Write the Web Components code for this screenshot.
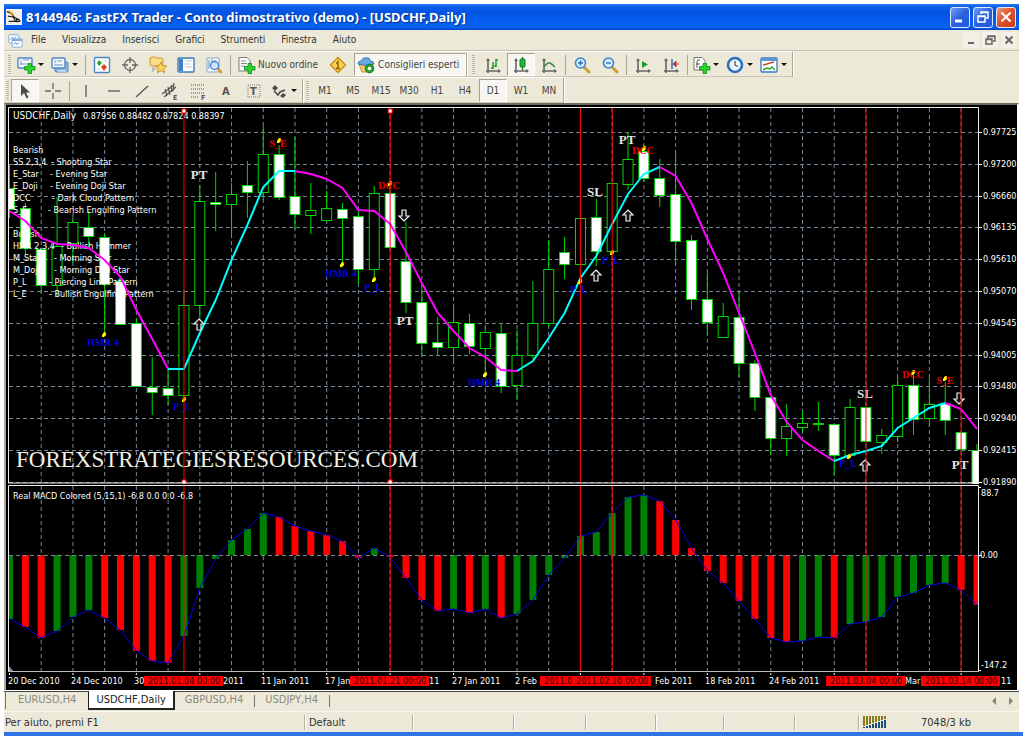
<!DOCTYPE html>
<html lang="it">
<head>
<meta charset="utf-8">
<title>8144946: FastFX Trader</title>
<style>
  body { margin: 0; background: #fff; font-family: "DejaVu Sans Condensed", "DejaVu Sans", sans-serif; font-stretch: condensed; font-size: 10px; color: #333; }
</style>
</head>
<body>
<trader-window></trader-window>
<script>
const define = (name, html, setup) => customElements.define(name, class extends HTMLElement {
  connectedCallback() {
    if (this.shadowRoot) return;
    const root = this.attachShadow({ mode: 'open' });
    root.innerHTML = typeof html === 'function' ? html(this) : html;
    if (setup) setup(this, root);
  }
});

/* ---------- icons, all on an 18x18 grid ---------- */
const plus = '<path d="M9.500 9.500h3.500v-3h3.500v3H20v3.500h-3.500v3.500H13V13H9.500z" transform="translate(-2 1)" fill="#2fd32f" stroke="#0b8a16" stroke-width=".8"/>';
const axes = '<path d="M4 3v14M2 15h14" stroke="#666" stroke-width="1.600" fill="none"/><path d="M2 5l2-3 2 3zM14 13l3 2-3 2z" fill="#666"/>';
const lens = '<path d="M11 11l5 5" stroke="#d29a2e" stroke-width="3" stroke-linecap="round"/><circle cx="7.500" cy="7" r="5" fill="#d9efff" stroke="#3b86cc" stroke-width="1.600"/>';
const ICONS = {
  app: '<rect width="18" height="18" fill="#f4f1e4"/><path d="M1 3l5 2 3 4 7 4M2 8l6 1 3 5M3 14h13M12 10v5" stroke="#222" stroke-width="1.400" fill="none"/><path d="M3 2l6 5" stroke="#d9a62b" stroke-width="2"/>',
  charts: '<rect x="1" y="2" width="12" height="10" rx="1" fill="#fff" stroke="#6d9fd5"/><rect x="5" y="7" width="12" height="10" rx="1" fill="#fff" stroke="#6d9fd5"/><path d="M5 8.500h12" stroke="#6d9fd5" stroke-width="2"/><path d="M3 8l2-3 2 2 3-3M7 14l2-3 2 3 3-3" stroke="#4d86c4" fill="none"/>',
  newchart: '<rect x="1" y="2" width="14" height="10" rx="1" fill="#f7fbff" stroke="#4d86c4" stroke-width="1.400"/><path d="M4 4v5M3 8h9M6 4h6" stroke="#7a9cc0"/>' + plus,
  profiles: '<rect x="4" y="6" width="13" height="10" rx="1" fill="#8bb6e2" stroke="#4d86c4"/><rect x="1" y="2" width="13" height="10" rx="1" fill="#eef6ff" stroke="#4d86c4" stroke-width="1.400"/><path d="M3 9h9" stroke="#aac6e4" stroke-width="2"/><path d="M4 4v3M6 5h5" stroke="#7a9cc0"/><path d="M7 15h8" stroke="#fff"/>',
  market: '<rect x="1.500" y="1.500" width="15" height="15" rx="1" fill="#fff" stroke="#4d86c4" stroke-width="1.400"/><path d="M6 4l3 3-3 3-2-3z" fill="#23a32c"/><path d="M11 8l3 3-3 4-3-4z" fill="#d9481c"/><path d="M10 5h4M4 13h3" stroke="#c4d3e2"/>',
  cross: '<circle cx="9" cy="9" r="5.500" fill="none" stroke="#666" stroke-width="1.300"/><path d="M9 1v6M9 11v6M1 9h6M11 9h6" stroke="#666" stroke-width="1.300"/>',
  navigator: '<path d="M1 3q0-2 2-2h3l1 1h5q2 0 2 2v4q0 2-2 2H3q-2 0-2-2z" fill="#f9dc86" stroke="#c79730"/><path d="M4 11v5M4 13h3" stroke="#999"/><path d="M12 6l1.700 3.600 4 .4-3 2.700.9 4-3.600-2-3.600 2 .9-4-3-2.700 4-.4z" fill="#fbd45b" stroke="#b98a26" stroke-width=".9"/>',
  terminal: '<rect x="1" y="2" width="16" height="14" rx="1" fill="#fff" stroke="#3a78bd" stroke-width="1.400"/><path d="M2 3h4v12H2z" fill="#3f80c6"/><path d="M8 5h7M8 8h6M8 11h7" stroke="#b9cade"/>',
  tester: '<path d="M2 2h12v14H2z" fill="#f4f8fc" stroke="#8ba6c2"/><path d="M4 4v9M7 3v10M10 4v6" stroke="#5d8fc4"/><path d="M13 13l3 3" stroke="#d29a2e" stroke-width="2.600" stroke-linecap="round"/><circle cx="9.500" cy="9.500" r="4" fill="#cfe7fb" fill-opacity=".8" stroke="#3b86cc" stroke-width="1.300"/>',
  order: '<path d="M2 1.500h8l3 3V15H2z" fill="#fff" stroke="#777"/><path d="M4 5h5M4 7.500h6M4 10h4" stroke="#8a8a8a"/>' + plus,
  warn: '<path d="M9 1.500L16.500 9 9 16.500 1.500 9z" fill="#fbd04a" stroke="#c58f1c" stroke-width="1.400"/><path d="M7 7h2v5M7 12.500h4M9 4.500v1.500" stroke="#8a5b06" stroke-width="1.400" fill="none"/>',
  expert: '<path d="M2 8h14l-3 8H5z" fill="#f1cf63" stroke="#c79730"/><path d="M1 8q0-3 3-3 2-4 5-3 4-1 4 3 4 0 4 3-8 3-16 0z" fill="#6aa9df" stroke="#3b78b8"/><circle cx="12.500" cy="12.500" r="4.300" fill="#27a32f" stroke="#12791c"/><circle cx="12.500" cy="12.500" r="1.800" fill="#fff"/>',
  bars: axes + '<path d="M9 6v7M9 12h-2M12 3v8M12 4h2M12 10h-2" stroke="#1f9a35" stroke-width="1.500"/>',
  candles: axes + '<path d="M10.500 1v13" stroke="#0b7a1c" stroke-width="1.300"/><rect x="8" y="3" width="5" height="8" rx="1" fill="#27b53a" stroke="#0b7a1c"/>',
  line: axes + '<path d="M4 11q4-5 6-4t5 4" fill="none" stroke="#3d8a4a" stroke-width="1.500"/>',
  zoomin: lens + '<path d="M5 7h5M7.500 4.500v5" stroke="#2f6fb5" stroke-width="1.400"/>',
  zoomout: lens + '<path d="M5 7h5" stroke="#2f6fb5" stroke-width="1.400"/>',
  scroll: axes + '<path d="M8 5l6 3.500L8 12z" fill="#1f9a35"/>',
  shift: axes + '<path d="M10 3v10" stroke="#2f6fb5" stroke-width="1.500"/><path d="M11 8l3-3v6zM13 8h4" fill="#c33" stroke="#c33"/>',
  indicators: '<path d="M2 1.500h8l3 3V14H2z" fill="#fff" stroke="#777"/><path d="M8 4q-3-1-3 2v6M4 8h4" stroke="#555" fill="none"/>' + plus,
  clock: '<circle cx="9" cy="9" r="7" fill="#e9f4fd" stroke="#2a70bd" stroke-width="2.600"/><path d="M9 5v4l3 1.500" stroke="#555" fill="none" stroke-width="1.300"/>',
  template: '<rect x="1" y="2" width="16" height="14" rx="1" fill="#fff" stroke="#3a78bd" stroke-width="1.300"/><path d="M1 3.500h16" stroke="#5b97d4" stroke-width="3"/><path d="M3 9l4-1 3-1 4-1" stroke="#b5502c" stroke-width="1.400" fill="none"/><path d="M3 14l4-2 3 1 2-2 3 3" stroke="#27a32f" stroke-width="1.400" fill="none"/>',
  pointer: '<path d="M5 2v12l3-3 2.500 5.500 2-1L10 10.500h4z" fill="#4b4b4b"/>',
  crosshair: '<path d="M9 1v6M9 11v6M1 9h6M11 9h6" stroke="#666" stroke-width="1.300"/>',
  vline: '<path d="M9 3v12" stroke="#555" stroke-width="1.300"/>',
  hline: '<path d="M3 9h12" stroke="#555" stroke-width="1.300"/>',
  trend: '<path d="M3 15L15 4" stroke="#555" stroke-width="1.300"/>',
  channel: '<path d="M1 12L13 3M3 15L15 5M4 7l2 7M7 5l2 8M10 3l1 7M13 1l-1 8" stroke="#555" stroke-width="1.200"/><text x="12" y="18" font-size="7" font-weight="bold" fill="#555">E</text>',
  fibo: '<path d="M2 3h14M2 7h14M2 11h14M2 15h8" stroke="#555" stroke-width="1.200" stroke-dasharray="1 1"/><text x="12" y="18" font-size="7" font-weight="bold" fill="#555">F</text>',
  text: '<text x="5" y="13" font-size="11" font-weight="bold" fill="#555">A</text>',
  label: '<rect x="3" y="3" width="12" height="12" fill="none" stroke="#777" stroke-dasharray="1 1"/><text x="5" y="13" font-size="11" font-weight="bold" fill="#555">T</text>',
  shapes: '<path d="M5 3l3 3-3 3-3-3zM13 11l3 2-3 3-3-2z" fill="#4b4b4b"/><path d="M4 9l4 4 2-3 5-2" stroke="#4b4b4b" stroke-width="1.600" fill="none"/>'
};
define('mt-icon', el => `<style>:host{display:block;flex:none;width:18px;height:18px}svg{display:block;width:100%;height:100%;overflow:visible}</style>
  <svg viewBox="0 0 18 18" aria-hidden="true">${ICONS[el.getAttribute('name')]}</svg>`);

/* ---------- title bar ---------- */
define('title-bar', `<style>
  :host{display:flex;align-items:center;height:26px;padding:0 3px 0 2px;gap:4px;box-sizing:border-box;
    background:linear-gradient(#2a7af0 0,#0a5ee8 3px,#0453e0 9px,#0560f4 20px,#0a63f6 23px,#0344c4 26px)}
  mt-icon{width:16px;height:16px}
  h1{margin:0;flex:1;font:bold 13px/26px "Noto Sans","Open Sans",sans-serif;color:#fff;text-shadow:1px 1px 1px #0a2f8a;white-space:nowrap;overflow:hidden}
  .b{display:flex;gap:3px}
  button{display:grid;place-items:center;width:20px;height:21px;padding:0;border:1px solid #dfe9ff;border-radius:3px;background:linear-gradient(135deg,#6f9df5,#2a5fe0 50%,#2259da)}
  .x{background:linear-gradient(135deg,#f09a7c,#e0522a 45%,#c93a10)}
  svg{width:16px;height:16px}
</style>
<mt-icon name="app"></mt-icon><h1><slot></slot></h1>
<div class="b">
 <button aria-label="Riduci a icona"><svg viewBox="0 0 16 16"><path d="M3 12h7" stroke="#fff" stroke-width="3"/></svg></button>
 <button aria-label="Ripristina"><svg viewBox="0 0 16 16"><path d="M6 5V3h7v6h-2M6 3.500h7" fill="none" stroke="#fff" stroke-width="1.500"/><path d="M3 7h7v6H3zM3 7.500h7" fill="none" stroke="#fff" stroke-width="1.500"/></svg></button>
 <button class="x" aria-label="Chiudi"><svg viewBox="0 0 16 16"><path d="M3.500 3.500l9 9M12.500 3.500l-9 9" stroke="#fff" stroke-width="2.200"/></svg></button>
</div>`);

/* ---------- menu bar ---------- */
define('menu-bar', `<style>
  :host{display:flex;align-items:center;height:20px;padding:0 2px 0 4px;background:#ece9d8}
  mt-icon{width:15px;height:15px}
  nav{display:flex;flex:1}
  a{padding:0 8px;line-height:20px;color:#333;text-decoration:none}
  .b{display:flex;gap:3px}
  button{width:16px;height:16px;padding:0;border:0;background:#f3f1e6;display:grid;place-items:center}
  svg{width:12px;height:12px;fill:none;stroke:#666;stroke-width:1.500}
</style>
<mt-icon name="charts"></mt-icon>
<nav></nav>
<div class="b">
 <button aria-label="Riduci"><svg viewBox="0 0 12 12"><path d="M3 9h6" stroke-width="2"/></svg></button>
 <button aria-label="Ripristina finestra"><svg viewBox="0 0 12 12"><path d="M4 4V2h7v5H9M4 2.500h7M2 5h6v5H2zM2 5.500h6"/></svg></button>
 <button aria-label="Chiudi finestra"><svg viewBox="0 0 12 12"><path d="M2.500 2.500l7 7M9.500 2.500l-7 7" stroke-width="2"/></svg></button>
</div>`, (el, root) => {
  root.querySelector('nav').innerHTML = ['File', 'Visualizza', 'Inserisci', 'Grafici', 'Strumenti', 'Finestra', 'Aiuto'].map(t => `<a href="#">${t}</a>`).join('');
});

/* ---------- toolbar parts ---------- */
define('tool-button', el => `<style>
  :host{display:block;flex:none}
  button{display:flex;align-items:center;justify-content:center;gap:3px;box-sizing:border-box;height:23px;min-width:28px;padding:0;border:0;background:none;font:inherit;color:#444;white-space:nowrap}
  :host([split]) button{width:34px;justify-content:flex-start;padding-left:2px}
  :host([wide]) button{padding:0 6px 0 2px}
  :host([pressed]) button{border:1px solid;border-color:#a5a293 #fff #fff #a5a293;background:#f7f6f0}
  i{width:0;height:0;border:3px solid transparent;border-top:3px solid #111;border-bottom:0}
</style><button aria-label="${el.getAttribute('label') || el.textContent}">${el.getAttribute('icon') ? `<mt-icon name="${el.getAttribute('icon')}"></mt-icon>` : ''}<slot></slot>${el.hasAttribute('split') ? '<i></i>' : ''}</button>`);
define('tool-grip', `<style>:host{display:block;flex:none;width:3px;height:20px;margin:0 4px;background:repeating-linear-gradient(#b5b2a0 0 1px,#f4f2e8 1px 2px)}:host([tight]){margin:0 2px}</style>`);
define('tool-sep', `<style>:host{display:block;flex:none;width:1px;height:20px;margin:0 2px;background:#a9a696}:host([end]){margin:0 1px 0 0;box-shadow:1px 0 #fff;height:24px}</style>`);
define('tool-bar', `<style>:host{display:flex;height:26px;background:#ece9d8}
  div{display:flex;align-items:center;border:solid;border-width:1px 1px 0 0;border-color:#fff #a9a696 #fff;box-shadow:inset 0 -1px #c9c6b6,1px 0 #fff;height:100%;box-sizing:border-box}</style><div><slot></slot></div>`);

/* ---------- chart data: vertical positions in the plot's own units ---------- */
const X = i => 9.5 + 15.86 * i;
/* [filled, top, bottom, high, low] */
const CANDLES = [
[1,188,209,165,218],[1,208,248,203,255],[1,249,285,249,293],[0,246,285,197,297],[0,222,243,217,263],[1,227,236,211,248],
[1,237,284,233,335],[1,281,324,276,324],[1,323,386,318,386],[1,387,392,357,415],[1,388,395,368,405],[0,305,395,290,400],
[0,201,305,185,318],[1,202,204,172,231],[0,194,204,183,234],[1,185,192,161,218],[0,154,192,126,200],[1,154,197,145,200],
[1,196,214,137,229],[0,210,215,183,234],[0,208,220,191,221],[1,209,218,203,264],[1,216,269,209,284],[0,193,269,186,278],
[1,193,247,187,247],[1,261,302,222,313],[1,302,343,285,355],[1,342,347,317,356],[0,322,347,306,362],[1,323,346,314,354],
[0,332,348,327,372],[1,333,386,323,393],[0,355,385,330,400],[0,323,355,281,359],[0,269,323,240,327],[1,252,264,237,279],
[0,218,264,218,264],[1,217,251,199,266],[0,183,251,183,251],[0,159,184,132,190],[1,151,178,145,182],[1,178,195,159,207],
[1,194,241,153,265],[1,240,299,235,310],[1,299,322,273,334],[0,316,337,303,337],[1,317,363,292,377],[1,363,397,360,411],
[1,397,438,397,455],[0,426,438,404,456],[0,423,427,411,432],[0,423,424,402,431],[1,424,455,424,475],[0,407,455,399,458],
[1,407,441,407,441],[0,435,442,429,454],[0,385,436,377,442],[1,385,419,375,435],[0,404,418,377,427],[1,403,420,382,435],
[1,432,449,432,449],[1,450,490,444,490]];
const MA = [211,221,238,244,245,248,260,277,310,339,369,369,333,300,260,225,187,171,171,174,179,188,210,211,224,252,283,313,331,348,357,370,371,361,338,313,278,256,224,194,174,167,176,203,239,273,313,353,395,422,440,451,461,455,451,446,428,418,408,403,409,429];
const MA_RUNS = [[0,10,0],[10,18,1],[18,32,0],[32,41,1],[41,52,0],[52,59,1],[59,61,0]];
const MACD = [619,627,638,631,617,610,618,630,651,661,663,636,588,559,540,529,513,517,526,531,535,541,558,548,557,578,600,611,609,613,609,618,614,600,575,558,536,532,513,497,495,501,520,548,571,583,601,619,638,642,641,637,638,624,622,617,597,593,585,583,590,605];
const MACD_SIGN = 'GRRGGGRRRRRGGGGGGRRRRRRGRRRRGRGRGGGGGGGGGRRRRRRRRRGGRGGGGGGGRR';
const MARKS = [11,24,36,38,54,60];
const PRICES = ['0.97725','0.97200','0.96660','0.96135','0.95610','0.95070','0.94545','0.94005','0.93480','0.92940','0.92415','0.91890'];
const priceY = k => Math.round(132 + k * 31.8);
const vGrid = (a, b) => Array.from({ length: 30 }, (_, k) => `<path d="M${X(2 * k + 2)} ${a}V${b}" class="grid"/>`).join('');
const vMarks = (a, b) => MARKS.map(i => `<path d="M${X(i)} ${a}V${b}" stroke="#f00"/>`).join('');
const svgCss = `:host{display:block;min-width:0}svg{display:block;width:100%;height:auto;overflow:visible;font-family:inherit;font-stretch:inherit}
  .grid{stroke:#778899;stroke-dasharray:4 3;fill:none}text{fill:#fff;font-size:9px}`;

define('price-plot', () => {
  const body = CANDLES.map(([w, t, b, h, l], i) => {
    const x = X(i);
    return `<path d="M${x} ${h}V${t}M${x} ${b}V${l}" stroke="#00d800"/><rect x="${x - 5}" y="${t + .5}" width="10" height="${b - t}" fill="${w ? '#fff' : '#000'}" stroke="#00d800"/>`;
  }).join('');
  const ma = MA_RUNS.map(([a, b, c]) => `<polyline fill="none" stroke="${c ? '#0ff' : '#f0f'}" stroke-width="2" points="${MA.slice(a, b + 1).map((y, k) => X(a + k) + ',' + y).join(' ')}"/>`).join('');
  const tag = (t, x, y, c) => `<text x="${x}" y="${y}" text-anchor="middle" class="tag" style="fill:${c}">${t}</text>`;
  const B = '#0000e0', R = '#f00000';
  const tags = [['HMR 4',103,346,B],['P_L',182,410,B],['S_E',278,147,R],['HMR 4',341,277,B],['P_L',373,291,B],['DCC',389,189,R],['HMR 4',484,386,B],['P_L',579,293,B],['P_L',611,264,B],['DCC',643,154,R],['P_L',848,467,B],['DCC',913,378,R],['S_E',945,384,R]].map(a => tag(...a)).join('');
  const dots = [[104,335],[184,400],[279,141],[342,265],[374,280],[390,184],[485,375],[580,282],[612,253],[644,149],[849,457],[913,373],[945,379]].map(([x, y]) =>
    `<path d="M${x - 2} ${y}l2-3h2v3l-2 2h-2z" fill="#ff0"/><path d="M${x + 1} ${y - 3}l1 2" stroke="#f60"/>`).join('');
  const notes = [['PT',199,179],['PT',405,325],['SL',595,196],['PT',627,144],['SL',865,398],['PT',960,469]].map(([t, x, y]) => `<text x="${x}" y="${y}" class="note" text-anchor="middle">${t}</text>`).join('');
  const arrow = (x, y, s) => `<path d="M${x} ${y}l5 ${5 * s}h-3v${6 * s}h-4v${-6 * s}h-3z" fill="#111" stroke="#eee" stroke-width="1.200"/>`;
  const arrows = [[199,319,1],[596,270,1],[628,210,1],[865,460,1],[404,221,-1],[959,404,-1]].map(a => arrow(...a)).join('');
  const legend = [['Bearish','',0,153],['SS 2,3,4','- Shooting Star',51,165],['E_Star','- Evening Star',50,177],['E_Doji','- Evening Doji Star',50,189],['DCC','- Dark Cloud Pattern',52,201],['S_E','- Bearish Engulfing Pattern',48,213],['Bullish','',0,237],['HMR 2,3,4','- Bullish Hammer',61,249],['M_Star','- Morning Star',54,261],['M_Doji','- Morning Doji Star',54,273],['P_L','- Piercing Line Pattern',49,285],['L_E','- Bullish Engulfing Pattern',49,297]]
    .map(([a, b, x, y]) => `<text x="13" y="${y}">${a}</text>` + (b ? `<text x="${x}" y="${y}">${b}</text>` : '')).join('');
  const anchors = [11, 24].map(i => [109, 480].map(y => `<rect x="${X(i) - 2}" y="${y}" width="4" height="4" fill="#fff" stroke="#f00"/>`).join('')).join('');
  return `<style>${svgCss}svg{overflow:hidden}.tag{font:bold 10px "Liberation Serif",serif}.note{font:bold 13px "Liberation Serif",serif;fill:#e4e4e4}.mark{font:23px "Liberation Serif",serif;fill:#f2efe6}.head{font-size:10px}</style>
  <svg viewBox="8 107 971 377" role="img" aria-label="USDCHF">
  ${vGrid(108, 483)}${PRICES.map((p, k) => `<path class="grid" d="M9 ${priceY(k) + .5}H978"/>`).join('')}
  ${body}${legend}${ma}${dots}${tags}${notes}${arrows}
  <text x="13" y="119" class="head">USDCHF,Daily</text><text x="83" y="119">0.87956 0.88482 0.87824 0.88397</text>
  <text x="16" y="467" class="mark">FOREXSTRATEGIESRESOURCES.COM</text>
  ${vMarks(107, 484)}${anchors}
  <path d="M8.500 483V107.500H978.500V483M8 483H979" fill="none" stroke="#eee"/></svg>`;
});

define('price-scale', () => `<style>${svgCss}</style><svg viewBox="979 107 38 377">
  ${PRICES.map((p, k) => `<path d="M979 ${priceY(k) + .5}h3" stroke="#fff"/><text x="983" y="${priceY(k) + 3}">${p}</text>`).join('')}</svg>`);

define('macd-plot', () => `<style>${svgCss}svg{overflow:hidden}</style><svg viewBox="8 484 971 189" role="img" aria-label="MACD">
  ${vGrid(486, 671)}
  ${MACD.map((y, i) => `<rect x="${X(i) - 3.5}" y="${Math.min(y, 555)}" width="7" height="${Math.max(2, Math.abs(y - 555))}" fill="${MACD_SIGN[i] === 'G' ? '#008000' : '#f00'}"/>`).join('')}
  <path class="grid" d="M9 555.500H978"/>
  <polyline fill="none" stroke="#0000e6" points="${MACD.map((y, i) => X(i) + ',' + y).join(' ')}"/>
  <text x="13" y="499">Real MACD Colored (5,15,1) -6.8 0.0 0.0 -6.8</text>
  ${vMarks(486, 672)}<path d="M9 666l5 6H9z" fill="#8a94a8"/>
  <path d="M8.500 672V485.500H978.500V672" fill="none" stroke="#eee"/><path d="M8 671.500H979" stroke="#bbb"/></svg>`);

define('macd-scale', `<style>${svgCss}</style><svg viewBox="979 484 38 189"><path d="M979 555.500h3M979 487.500h2M979 670.500h2" stroke="#fff"/>
  <text x="981" y="496">88.7</text><text x="980" y="558">0.00</text><text x="981" y="668">-147.2</text></svg>`);

define('time-axis', () => `<style>${svgCss}:host{grid-column:1/-1}.r{fill:#300}</style><svg viewBox="8 673 1009 16">
  ${[0,4,8,12,16,20,24,28,32,36,40,44,48,52,56,60].map(i => `<path d="M${X(i)} 673v2" stroke="#fff"/>`).join('')}
  ${[['20 Dec 2010',8],['24 Dec 2010',71],['30',134],['2011',223],['11 Jan 2011',261],['17 Jan',325],['11',429],['27 Jan 2011',452],['2 Feb',515],['Feb 2011',655],['18 Feb 2011',705],['24 Feb 2011',769],['Mar',905],['11',1001]]
    .map(([t, x]) => `<text x="${x}" y="684">${t}</text>`).join('')}
  ${[['2011.01.04 00:00',144],['2011.01.21 00:00',350],['2011.0',540],['2011.02.10 00:00',572],['2011.03.04 00:00',826],['2011.03.14 00:00',921]].map(([t, x]) => `<rect x="${x}" y="676" width="79" height="10" fill="#f00"/><text class="r" x="${x + 4}" y="684">${t}</text>`).join('')}</svg>`);

define('chart-window', `<style>
  :host{display:grid;grid-template-columns:971fr 38fr;padding:2px 0 1px 2px;background:#000;border:solid;border-width:2px 2px 0 2px;border-color:#6f6c60 #fff #fff #aca899}
</style><price-plot></price-plot><price-scale></price-scale><macd-plot></macd-plot><macd-scale></macd-scale><time-axis></time-axis>`);

/* ---------- tabs and status bar ---------- */
define('chart-tabs', `<style>
  :host{display:flex;align-items:flex-start;height:21px;box-sizing:border-box;background:#ece9d8;border-top:1px solid #fff;padding-left:1px;box-shadow:inset 0 1px #444;font-size:11px}
  button{box-sizing:border-box;height:18px;padding:0 11px 0 10px;border:0;background:none;font:inherit;color:#8b897e;line-height:18px}
  button:first-of-type{border-left:1px solid #77756a;padding:0 12px}
  .on{background:#fff;color:#222;border:solid #222;border-width:0 2px 2px 1px;padding:0 7px;height:19px}
  hr{width:1px;height:12px;margin:4px 0 0;border:0;background:#77756a}
  .a{margin-left:auto;height:19px;display:flex;gap:13px;align-items:center;padding-right:6px}
  i{border:4px solid transparent;border-right-color:#88867a;border-left:0}
  i+i{border:4px solid transparent;border-left-color:#88867a;border-right:0}
</style><button>EURUSD,H4</button><button class="on">USDCHF,Daily</button><button>GBPUSD,H4</button><hr><button>USDJPY,H4</button><hr><div class="a"><i></i><i></i></div>`);

define('status-bar', `<style>
  :host{display:grid;grid-template-columns:300fr 108fr 101fr 72fr 70fr 68fr 71fr 64fr 161fr;align-items:center;height:21px;box-sizing:border-box;background:#ece9d8;border-top:1px solid #f8f7f0;font-size:11px}
  span{height:15px;line-height:15px;padding-left:4px;border-left:1px solid #b3b0a0;box-shadow:inset 1px 0 #fff;white-space:nowrap;display:flex;align-items:center}
  span:first-of-type{border:0;box-shadow:none;padding-left:1px}
  svg{width:24px;height:12px;margin-right:34px}
</style><span>Per aiuto, premi F1</span><span>Default</span><span></span><span></span><span></span><span></span><span></span><span></span>
<span><svg viewBox="0 0 24 12" aria-hidden="true"></svg>7048/3 kb</span>`, (el, root) => {
  root.querySelector('svg').innerHTML = Array.from({ length: 8 }, (_, k) => `<rect x="${k * 3}" width="2" height="${10 - k}" fill="${k % 2 ? '#6b8a1e' : '#a0701e'}"/><rect x="${k * 3}" y="${11 - k}" width="2" height="${1 + k}" fill="#1f4f78"/>`).join('');
});

/* ---------- the window ---------- */
define('trader-window', `<style>
  :host{display:block;padding:4px 4px 0 4px}
  footer{height:4px;background:#2f74e4;margin-right:-4px}
  .top{border-top:1px solid #c5c2b2}
  .s{margin-left:2px}
</style>
<title-bar>8144946: FastFX Trader - Conto dimostrativo (demo) - [USDCHF,Daily]</title-bar>
<menu-bar></menu-bar>
<div class="top"><tool-bar>
<tool-grip></tool-grip><tool-button icon="newchart" split label="Nuovo grafico"></tool-button><tool-button icon="profiles" split label="Profili"></tool-button><tool-sep></tool-sep>
<tool-button icon="market" label="Market Watch"></tool-button><tool-button icon="cross" label="Finestra dati"></tool-button><tool-button icon="navigator" label="Navigatore"></tool-button><tool-button icon="terminal" label="Terminale"></tool-button><tool-button icon="tester" label="Strategy Tester"></tool-button><tool-sep></tool-sep>
<tool-button class="s" icon="order" wide>Nuovo ordine</tool-button><tool-button icon="warn" label="MetaEditor"></tool-button><tool-button class="s" icon="expert" wide pressed>Consiglieri esperti</tool-button><tool-sep end></tool-sep>
<tool-grip></tool-grip><tool-button icon="bars" label="Barre"></tool-button><tool-button icon="candles" pressed label="Candele"></tool-button><tool-button icon="line" label="Linea"></tool-button><tool-sep></tool-sep>
<tool-button icon="zoomin" label="Zoom avanti"></tool-button><tool-button icon="zoomout" label="Zoom indietro"></tool-button><tool-sep></tool-sep>
<tool-button icon="scroll" label="Scorrimento"></tool-button><tool-button icon="shift" label="Spostamento"></tool-button><tool-sep></tool-sep>
<tool-button icon="indicators" split label="Indicatori"></tool-button><tool-button icon="clock" split label="Periodi"></tool-button><tool-button icon="template" split label="Modelli"></tool-button>
</tool-bar></div>
<tool-bar>
<tool-grip tight></tool-grip><tool-button icon="pointer" pressed label="Cursore"></tool-button><tool-button icon="crosshair" label="Mirino"></tool-button><tool-sep></tool-sep>
<tool-button icon="vline" label="Linea verticale"></tool-button><tool-button icon="hline" label="Linea orizzontale"></tool-button><tool-button icon="trend" label="Trendline"></tool-button><tool-button icon="channel" label="Canale"></tool-button><tool-button icon="fibo" label="Fibonacci"></tool-button><tool-button icon="text" label="Testo"></tool-button><tool-button icon="label" label="Etichetta"></tool-button><tool-button icon="shapes" split label="Frecce"></tool-button><tool-sep end></tool-sep>
<tool-grip tight></tool-grip><tool-button>M1</tool-button><tool-button>M5</tool-button><tool-button>M15</tool-button><tool-button>M30</tool-button><tool-button>H1</tool-button><tool-button>H4</tool-button><tool-button pressed>D1</tool-button><tool-button>W1</tool-button><tool-button>MN</tool-button>
</tool-bar>
<chart-window></chart-window>
<chart-tabs></chart-tabs>
<status-bar></status-bar>
<footer></footer>`);
</script>
</body>
</html>
